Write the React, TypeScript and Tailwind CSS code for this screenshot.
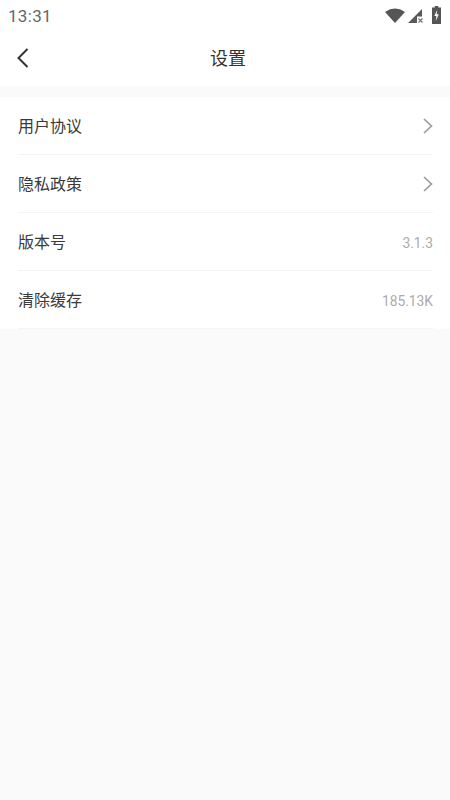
const rows = [
  { label: '用户协议', arrow: true },
  { label: '隐私政策', arrow: true },
  { label: '版本号', value: '3.1.3' },
  { label: '清除缓存', value: '185.13K' },
];

function StatusIcons() {
  return (
    <div className="flex items-center">
      <svg width="20" height="15" viewBox="0 0 20 15" className="mr-[3px]">
        <path d="M0 4 Q10 -2.8 20 4 L10 15 Z" fill="#555" />
      </svg>
      <svg width="15" height="15" viewBox="0 0 15 15" className="mr-[9px]">
        <path d="M0 15 L14 1 L14 8.5 L9 8.5 L9 15 Z" fill="#595959" />
        <path d="M10.5 10.5 L14.5 14.5 M14.5 10.5 L10.5 14.5" stroke="#777" strokeWidth="1.2" />
      </svg>
      <svg width="9" height="18" viewBox="0 0 10 18" preserveAspectRatio="none" className="mb-[1px]">
        <path d="M3 0 H7 V1.5 H10 V18 H0 V1.5 H3 Z" fill="#555" />
        <path d="M5.8 4 L2.5 10 H4.8 L4.2 15 L7.6 8.3 H5.3 Z" fill="#fafafa" />
      </svg>
    </div>
  );
}

export default function App() {
  return (
    <div className="w-[450px] h-[800px] bg-[#fafafa] flex flex-col font-['Roboto','Noto_Sans_CJK_SC',sans-serif]">
      <div className="h-[86px] bg-white shrink-0">
        <div className="h-[30px] pl-2 pr-[9px] flex items-center justify-between">
          <span className="text-[17px] leading-[24px] mt-[1px] text-[#666] tracking-[0.3px]">13:31</span>
          <StatusIcons />
        </div>
        <div className="h-[56px] pl-[17px] flex items-center relative">
          <svg width="12" height="20" viewBox="0 0 12 20" fill="none">
            <path d="M10.5 1 L1.5 10 L10.5 19" stroke="#333" strokeWidth="2" />
          </svg>
          <span className="absolute left-[6px] right-0 top-[17px] text-center text-[18px] leading-[24px] text-[#333]">设置</span>
        </div>
      </div>
      <div className="mt-[11px] bg-white pl-[18px] pr-[17px]">
        {rows.map(row => (
          <div key={row.label} className="h-[58px] flex items-center justify-between border-b border-[#f4f4f4]">
            <span className="text-[16px] leading-[24px] mt-[3px] text-[#3a3a3a]">{row.label}</span>
            {row.arrow ? (
              <svg width="10" height="16" viewBox="0 0 10 16" fill="none">
                <path d="M1 1 L8.5 8 L1 15" stroke="#999" strokeWidth="1.6" />
              </svg>
            ) : (
              <span className="text-[13.8px] leading-[20px] mt-[3px] text-[#ababab]">{row.value}</span>
            )}
          </div>
        ))}
      </div>
    </div>
  );
}
